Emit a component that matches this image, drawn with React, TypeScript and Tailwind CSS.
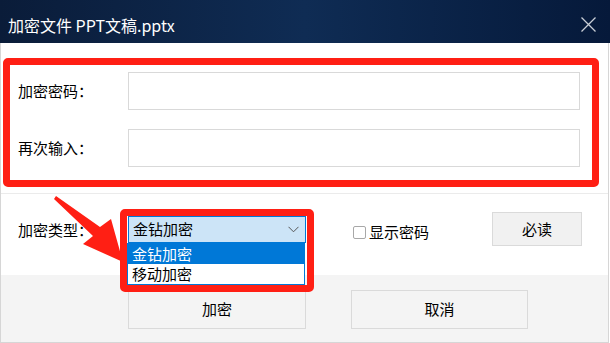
import React from "react";

const font = { fontFamily: '"Noto Sans CJK SC", "Noto Sans", sans-serif' };

function CloseIcon() {
  return (
    <svg width="15" height="15" viewBox="0 0 15 15" fill="none">
      <path d="M0.5 0.5 L14.5 14.5 M14.5 0.5 L0.5 14.5" stroke="#c9ced6" strokeWidth="1.3" />
    </svg>
  );
}

function Field({ label }: { label: string }) {
  return (
    <div className="flex items-center h-[38px]">
      <span className="w-[110px] text-[15px] text-black">{label}</span>
      <div className="w-[452px] h-[38px] border border-[#d9d9d9] bg-white" />
    </div>
  );
}

export default function App() {
  return (
    <div className="relative w-[610px] h-[343px] bg-white overflow-hidden" style={font}>
      <div className="h-[43px] flex items-center justify-between pl-[8px] pr-[14px] pt-[6px] bg-gradient-to-r from-[#0a1c39] via-[#0f2c54] to-[#06193a]">
        <span className="text-white text-[16px]">加密文件 PPT文稿.pptx</span>
        <CloseIcon />
      </div>

      <div className="w-[609px] h-[300px] border-x border-b border-[#d6d6d6] flex flex-col">
        <div className="mt-[15px] ml-[2px] w-[596px] h-[129px] border-[7px] border-[#ff1f14] rounded-[5px] pt-[7px] pl-[8px] flex flex-col gap-[19px]">
          <Field label="加密密码：" />
          <Field label="再次输入：" />
        </div>

        <div className="mt-[6px] h-px bg-[#ebebeb]" />

        <div className="h-[81px] pt-[18px]">
          <div className="flex items-center h-[34px]">
            <span className="ml-[17px] w-[110px] text-[15px] text-black mt-[2px]">加密类型：</span>
            <div className="w-[178px] h-[27px] bg-[#cce4f7] border border-[#0078d7] flex items-center justify-between pl-[4px] pr-[6px]">
              <span className="text-[15px] text-black">金钻加密</span>
              <svg width="11" height="7" viewBox="0 0 11 7" fill="none">
                <path d="M0.5 0.8 L5.5 5.8 L10.5 0.8" stroke="#555" strokeWidth="1" />
              </svg>
            </div>
            <div className="ml-[47px] flex items-center gap-[3px] mt-[6px]">
              <div className="w-[13px] h-[13px] border border-[#a8a8a8] rounded-[2px] bg-white" />
              <span className="text-[15px] text-black">显示密码</span>
            </div>
            <button className="ml-[63px] w-[90px] h-[34px] bg-[#f1f1f1] border border-[#dadada] text-[15px] text-black">
              必读
            </button>
          </div>
        </div>

        <div className="flex-1 bg-[#f4f4f4] pt-[15px] flex gap-[45px] pl-[127px]">
          <button className="w-[178px] h-[39px] bg-[#f4f4f4] border border-[#dadada] text-[15px] text-black">
            加密
          </button>
          <button className="w-[177px] h-[39px] bg-[#f4f4f4] border border-[#dadada] text-[15px] text-black">
            取消
          </button>
        </div>
      </div>

      {/* open dropdown list */}
      <div className="absolute left-[127px] top-[243px] w-[178px] border border-[#0078d7] bg-white">
        <div className="h-[20px] bg-[#0078d7] text-white text-[15px] leading-[20px] pl-[4px]">金钻加密</div>
        <div className="h-[20px] text-black text-[15px] leading-[20px] pl-[4px]">移动加密</div>
      </div>

      {/* red annotation box around select */}
      <div className="absolute left-[120px] top-[209px] w-[194px] h-[83px] border-[7px] border-[#ff1f14] rounded-[5px]" />

      {/* red arrow */}
      <svg className="absolute left-[45px] top-[190px]" width="85" height="80" viewBox="0 0 85 80">
        <polygon points="11,6 55,37 66,29 78,72 38,54 48,46 9,9" fill="#ff1f14" />
      </svg>
    </div>
  );
}
